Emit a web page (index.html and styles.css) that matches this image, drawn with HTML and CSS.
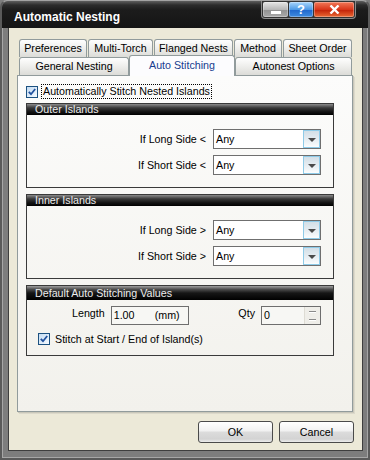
FILE: index.html
```html
<!DOCTYPE html>
<html lang="en">
  <head>
    <meta charset="UTF-8" />
    <meta name="viewport" content="width=device-width, initial-scale=1.0" />
    <title>Automatic Nesting</title>
    <link rel="stylesheet" href="styles.css">
  </head>
  <body>
    <div class="window">
      <div class="titlebar">
        <div class="title">Automatic Nesting</div>
        <div class="caption-buttons">
          <span class="cap-btn cap-min"><span class="dash"></span></span>
          <span class="cap-btn cap-help">?</span>
          <span class="cap-btn cap-close">
            <svg width="11" height="9" viewBox="0 0 11 9">
              <path d="M1.5 0.5 L9.5 8.5 M9.5 0.5 L1.5 8.5" stroke="#fff" stroke-width="2.4" fill="none" />
            </svg>
          </span>
        </div>
      </div>

      <div class="client">
        <div class="tab-row">
          <div class="tab tab-pref">Preferences</div>
          <div class="tab tab-torch">Multi-Torch</div>
          <div class="tab tab-flanged">Flanged Nests</div>
          <div class="tab tab-method">Method</div>
          <div class="tab tab-sheet">Sheet Order</div>
        </div>
        <div class="tab-row">
          <div class="tab tab-general">General Nesting</div>
          <div class="tab tab-stitch active">Auto Stitching</div>
          <div class="tab tab-autonest">Autonest Options</div>
        </div>

        <div class="panel">
          <div class="check-row main-check">
            <span class="checkbox">
              <svg width="8" height="8" viewBox="0 0 8 8">
                <path d="M0.8 3.8 L3 6.2 L7.2 1" fill="none" stroke="#21519e" stroke-width="1.8" />
              </svg>
            </span>
            <span class="focus-label">Automatically Stitch Nested Islands</span>
          </div>

          <div class="group">
            <div class="group-head">Outer Islands</div>
            <div class="group-body">
              <div class="field-row">
                <span class="field-label">If Long Side &lt;</span>
                <div class="combo"><span class="combo-text">Any</span><span class="combo-btn"></span></div>
              </div>
              <div class="field-row">
                <span class="field-label">If Short Side &lt;</span>
                <div class="combo"><span class="combo-text">Any</span><span class="combo-btn"></span></div>
              </div>
            </div>
          </div>

          <div class="group">
            <div class="group-head">Inner Islands</div>
            <div class="group-body">
              <div class="field-row">
                <span class="field-label">If Long Side &gt;</span>
                <div class="combo"><span class="combo-text">Any</span><span class="combo-btn"></span></div>
              </div>
              <div class="field-row">
                <span class="field-label">If Short Side &gt;</span>
                <div class="combo"><span class="combo-text">Any</span><span class="combo-btn"></span></div>
              </div>
            </div>
          </div>

          <div class="group group-defaults">
            <div class="group-head">Default Auto Stitching Values</div>
            <div class="group-body">
              <div class="value-row">
                <span class="value-label">Length</span>
                <div class="textbox length-box"><span class="num">1.00</span><span>(mm)</span></div>
                <span class="value-label qty-label">Qty</span>
                <div class="textbox qty-box">
                  <span class="num">0</span>
                  <span class="spin"><span class="spin-mark"></span><span class="spin-mark"></span></span>
                </div>
              </div>
              <div class="check-row">
                <span class="checkbox">
                  <svg width="8" height="8" viewBox="0 0 8 8">
                    <path d="M0.8 3.8 L3 6.2 L7.2 1" fill="none" stroke="#21519e" stroke-width="1.8" />
                  </svg>
                </span>
                <span class="check-label">Stitch at Start / End of Island(s)</span>
              </div>
            </div>
          </div>
        </div>

        <div class="actions">
          <button class="btn">OK</button>
          <button class="btn">Cancel</button>
        </div>
      </div>
    </div>
  </body>
</html>
```

FILE: styles.css
```css
/* Reset some default styles */
body,
div,
span,
button {
  margin: 0;
  padding: 0;
  box-sizing: border-box;
}

body {
  font-family: "Liberation Sans", Arial, sans-serif;
  font-size: 10.7px;
  color: #000;
  background-color: #7d7d7d;
}

.window {
  width: 370px;
  height: 460px;
  display: flex;
  flex-direction: column;
  background-color: #7d7d7d;
  border: 2px solid #5a5a5a;
  border-top: 1px solid #a2a2a2;
  border-radius: 7px 7px 0 0;
  box-shadow: inset 1px 0 #a6a6a6, inset -1px 0 #a6a6a6, inset 0 -1px #a6a6a6;
}

/* title bar */
.titlebar {
  height: 27px;
  display: flex;
  align-items: flex-start;
  background: linear-gradient(#5e5e5e 0, #2c2c2c 4px, #1c1c1c 9px, #151515 100%);
  border-radius: 6px 6px 0 0;
}

.titlebar .title {
  margin: 9px 0 0 12px;
  line-height: 14px;
  font-size: 12px;
  font-weight: bold;
  color: #fff;
}

.caption-buttons {
  margin: 0 12px 0 auto;
  height: 18px;
  display: flex;
  gap: 1px;
  padding: 1px;
  background-color: #333;
  border: 1px solid #8c8c8c;
  border-top: none;
  border-radius: 0 0 4px 4px;
}

.cap-btn {
  height: 15px;
  border-radius: 2px;
  display: flex;
  align-items: center;
  justify-content: center;
  color: #fff;
  box-shadow: inset 0 0 0 1px rgba(255, 255, 255, 0.3);
}

.cap-min {
  width: 25px;
  align-items: flex-end;
  padding-bottom: 3px;
  background: linear-gradient(#e6e6e6, #b8b8b8 50%, #919191 51%, #a9a9a9);
}

.cap-min .dash {
  width: 10px;
  height: 3px;
  background-color: #fff;
}

.cap-help {
  width: 24px;
  font-size: 13px;
  font-weight: bold;
  background: linear-gradient(#a9d6fb, #4f9be6 50%, #1f66cc 51%, #3f8ce0);
}

.cap-close {
  width: 40px;
  background: linear-gradient(#f27a5a, #d9361a 50%, #c01f06 51%, #ea6a34);
}

/* dialog body */
.client {
  flex: 1;
  display: flex;
  flex-direction: column;
  margin: 0 5px 7px 6px;
  padding: 11px 9px 7px 8px;
  background-color: #ece9d8;
  border: 1px solid #3e3e3e;
  border-top: none;
}

.tab-row {
  display: flex;
  align-items: flex-start;
  margin-left: 2px;
  height: 18px;
}

.tab {
  height: 18px;
  line-height: 16px;
  text-align: center;
  border: 1px solid #919b9c;
  border-bottom: none;
  border-radius: 3px 3px 0 0;
  background: linear-gradient(#fefefe, #f1f1ef 40%, #dcdcd8);
  white-space: nowrap;
}

.tab-pref { width: 68px; margin-right: 1px; }
.tab-torch { width: 65px; margin-right: 1px; }
.tab-flanged { width: 79px; margin-right: 1px; }
.tab-method { width: 48px; margin-right: 1px; }
.tab-sheet { width: 69px; }
.tab-general { width: 110px; }
.tab-stitch { width: 106px; }
.tab-autonest { width: 117px; }

.tab.active {
  position: relative;
  z-index: 1;
  height: 21px;
  margin-top: -2px;
  margin-bottom: -1px;
  line-height: 18px;
  color: #173d8e;
  background: #fcfcfe;
}

.panel {
  flex: 1;
  padding: 8px 18px 0 8px;
  border: 1px solid #919b9c;
  background: linear-gradient(#fcfcfb, #f2f1ec);
  box-shadow: 1px 1px 0 #c9c7ba, 2px 2px 0 #dcd9cb;
}

.check-row {
  display: flex;
  align-items: center;
}

.main-check {
  height: 15px;
  gap: 3px;
}

.checkbox {
  width: 12px;
  height: 12px;
  display: flex;
  align-items: center;
  justify-content: center;
  border: 1px solid #1c5180;
  background: linear-gradient(135deg, #c4dcf2, #f6faff);
}

.focus-label {
  height: 15px;
  line-height: 13px;
  padding: 0 1px;
  border: 1px dotted #000;
}

/* group boxes */
.group {
  margin-top: 6px;
  border: 1px solid #3a3a3a;
}

.main-check + .group {
  margin-top: 4px;
}

.group-head {
  height: 11px;
  line-height: 11px;
  padding-left: 8px;
  color: #ececec;
  background: linear-gradient(#8c8c8c, #3a3a3a 35%, #141414 70%, #000);
  overflow: hidden;
}

.group-body {
  display: flex;
  flex-direction: column;
  gap: 6px;
  padding: 14px 12px 12px 12px;
}

.field-row {
  display: flex;
  justify-content: flex-end;
  align-items: center;
  gap: 7px;
}

.combo {
  width: 108px;
  height: 20px;
  display: flex;
  background-color: #fff;
  border: 1px solid #6f6f6f;
}

.combo-text {
  flex: 1;
  padding-left: 2px;
  line-height: 18px;
}

.combo-btn {
  width: 17px;
  height: 18px;
  display: flex;
  align-items: center;
  justify-content: center;
  border: 1px solid #8fcbe8;
  background: linear-gradient(#d3dfe7, #e5ecf1 50%, #fbfdfe);
}

.combo-btn::after {
  content: "";
  border-left: 4px solid transparent;
  border-right: 4px solid transparent;
  border-top: 4px solid #4a4a4a;
  margin-top: 2px;
}

/* default values group */
.group-defaults .group-head {
  height: 14px;
  line-height: 14px;
  background: linear-gradient(#a0a0a0, #4a4a4a 25%, #161616 50%, #000);
}

.group-defaults .group-body {
  gap: 8px;
  padding: 6px 12px 10px 11px;
}

.value-row {
  display: flex;
  align-items: flex-start;
  height: 19px;
  padding-left: 34px;
}

.value-label {
  padding-top: 1px;
  line-height: 12px;
  margin-right: 6px;
}

.qty-label {
  margin-left: auto;
  margin-right: 6px;
}

.textbox {
  height: 19px;
  display: flex;
  line-height: 17px;
  border: 1px solid #6e6e6e;
  background-color: #f7f7f4;
}

.length-box {
  width: 78px;
  padding-left: 2px;
}

.length-box .num {
  width: 41px;
}

.qty-box {
  width: 60px;
  padding-left: 2px;
}

.qty-box .num {
  flex: 1;
}

.spin {
  width: 16px;
  display: flex;
  flex-direction: column;
  justify-content: space-around;
  align-items: center;
  border-left: 1px solid #dedcd4;
  background-color: #efeee9;
}

.spin-mark {
  width: 7px;
  height: 1px;
  background-color: #8a8a8a;
  box-shadow: 0 1px #fff;
}

.group-defaults .check-row {
  height: 12px;
  gap: 5px;
}

/* buttons */
.actions {
  display: flex;
  justify-content: flex-end;
  gap: 6px;
  margin: 9px -1px 0 0;
}

.btn {
  width: 75px;
  height: 22px;
  font-family: "Liberation Sans", Arial, sans-serif;
  font-size: 10.7px;
  color: #000;
  border: 1px solid #4a4a4a;
  border-radius: 3px;
  background: linear-gradient(#ffffff, #f1f1f1 45%, #dcdcdc 50%, #d3d3d3 85%, #ececec);
}
```
